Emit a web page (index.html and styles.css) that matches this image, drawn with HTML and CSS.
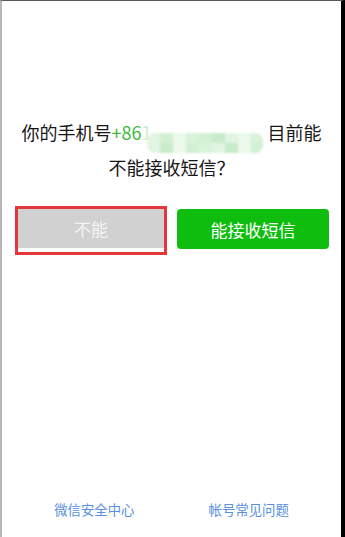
FILE: index.html
```html
<!DOCTYPE html>
<html lang="zh-CN">
<head>
<meta charset="utf-8">
<title>短信验证</title>
<link rel="stylesheet" href="styles.css">
</head>
<body>
<div class="frame">
  <div class="question">
    <p class="line">你的手机号<span class="green">+86</span><span class="frag">1</span><span class="mosaic"><i class="c1"></i><i class="c2"></i><i class="c3"></i><i class="c4"></i><i class="c2"></i><i class="c5"></i><i class="c1"></i><i class="c3"></i><i class="c4"></i><i class="c1"></i><i class="c5"></i><i class="c3"></i><i class="c2"></i><i class="c4"></i><i class="c1"></i><i class="c5"></i><i class="c3"></i><i class="c2"></i></span>目前能</p>
    <p class="line">不能接收短信？</p>
  </div>
  <div class="buttons">
    <div class="mark">
      <div class="btn btn-no">不能</div>
    </div>
    <div class="btn btn-yes">能接收短信</div>
  </div>
  <div class="footer">
    <a class="link">微信安全中心</a>
    <a class="link">帐号常见问题</a>
  </div>
</div>
</body>
</html>
```
FILE: styles.css
```css
html, body {
  margin: 0;
  padding: 0;
  background: #fff;
}
body {
  font-family: "Noto Sans CJK SC", "Noto Sans", sans-serif;
}
.frame {
  width: 345px;
  height: 537px;
  box-sizing: border-box;
  border-top: 1px solid #5a5a5a;
  border-left: 2px solid #b8b8b8;
  border-right: 4px solid #000;
  display: flex;
  flex-direction: column;
  background: #fff;
}
.question {
  margin-top: 117px;
  text-align: center;
  color: #161616;
  font-size: 18px;
  line-height: 29px;
}
.line {
  margin: 0;
  white-space: nowrap;
}
.green {
  color: #3dba3d;
}
.frag {
  color: #cdeccd;
  margin-right: -5px;
}
.mosaic {
  display: inline-grid;
  grid-template-columns: repeat(9, 1fr);
  grid-template-rows: repeat(2, 1fr);
  width: 116px;
  height: 20px;
  vertical-align: -3px;
  margin: 0 4px 0 1px;
  border-radius: 8px;
  overflow: hidden;
  filter: blur(1px);
}
.mosaic i { display: block; }
.c1 { background: #e2f4e2; }
.c2 { background: #d2efd3; }
.c3 { background: #ecf8ec; }
.c4 { background: #d9f2da; }
.c5 { background: #c8ebca; }
.buttons {
  display: flex;
  align-items: flex-start;
  padding-left: 13px;
  margin-top: 24px;
  gap: 10px;
}
.mark {
  border: 3px solid #e3383b;
  padding-bottom: 4px;
  background: #fff;
}
.btn {
  display: flex;
  align-items: center;
  justify-content: center;
  font-size: 17px;
  color: #fff;
}
.btn-no {
  width: 146px;
  height: 39px;
  background: #d1d1d1;
  color: #f4f4f4;
}
.btn-yes {
  width: 152px;
  height: 40px;
  margin-top: 3px;
  background: #0fbd0f;
  border-radius: 4px;
}
.footer {
  margin-top: auto;
  padding-bottom: 18px;
  display: flex;
  justify-content: center;
  gap: 74px;
  font-size: 13.4px;
  line-height: 20px;
}
.link {
  color: #5790e0;
  text-decoration: none;
}
```
